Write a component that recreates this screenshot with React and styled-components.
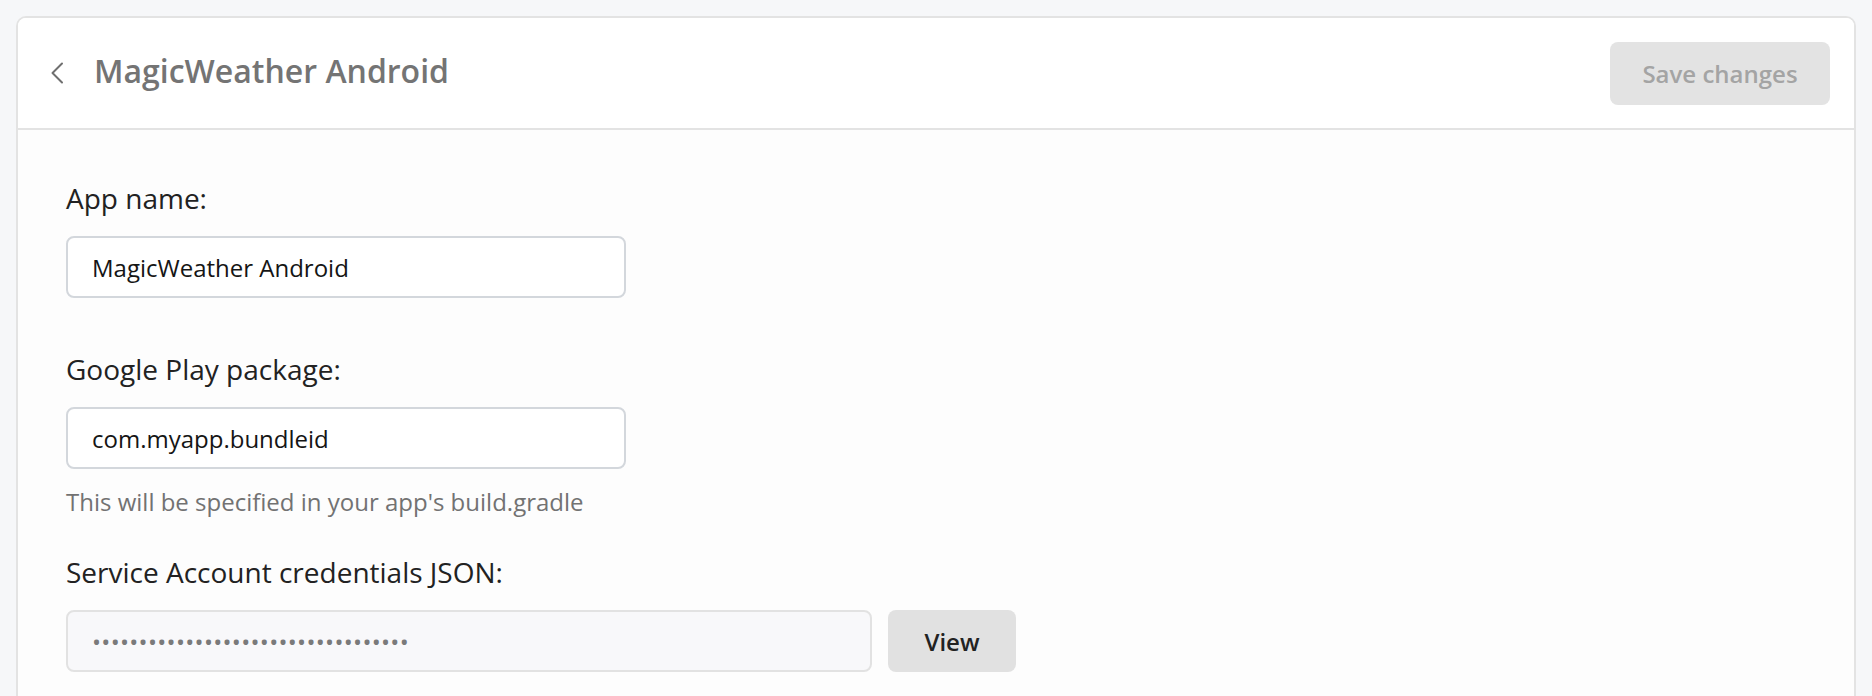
import React from "react";
import styled, { createGlobalStyle } from "styled-components";

const GlobalStyle = createGlobalStyle`
  html, body {
    margin: 0;
    padding: 0;
    background: #f6f7f9;
    font-family: "Open Sans", "Noto Sans", sans-serif;
  }
  * { box-sizing: border-box; }
`;

const Page = styled.div`
  padding: 16px 16px 0 16px;
`;

const Card = styled.div`
  border: 2px solid #e3e3e3;
  border-radius: 10px;
  background: #ffffff;
  overflow: hidden;
`;

const Header = styled.div`
  height: 112px;
  display: flex;
  align-items: center;
  justify-content: space-between;
  padding: 0 24px 0 32px;
  border-bottom: 2px solid #e3e3e3;
  background: #ffffff;
`;

const TitleGroup = styled.div`
  display: flex;
  align-items: center;
  gap: 30px;
`;

const BackButton = styled.button`
  border: none;
  background: none;
  padding: 0;
  display: flex;
  align-items: center;
  cursor: pointer;
`;

const Title = styled.h1`
  margin: 0 0 5px 0;
  font-size: 32px;
  font-weight: 600;
  color: #747474;
  line-height: 44px;
`;

const SaveButton = styled.button`
  width: 220px;
  height: 63px;
  border: none;
  border-radius: 8px;
  background: #e3e3e3;
  color: #a4a4a4;
  font-family: "Open Sans", sans-serif;
  font-size: 24px;
  font-weight: 600;
`;

const Body = styled.div`
  padding: 48px 48px 80px 48px;
  background: #fdfdfd;
  display: flex;
  flex-direction: column;
`;

const Field = styled.div`
  display: flex;
  flex-direction: column;
  margin-top: ${(p) => p.$top || 0}px;
`;

const Label = styled.label`
  font-size: 28px;
  line-height: 40px;
  color: #222222;
  margin-bottom: 18px;
`;

const Input = styled.input`
  width: 560px;
  height: 62px;
  border: 2px solid #d3d7dc;
  border-radius: 8px;
  padding: 0 24px;
  font-family: "Open Sans", sans-serif;
  font-size: 24px;
  color: #151515;
  background: #ffffff;
  outline: none;
`;

const Help = styled.div`
  margin-top: 15px;
  font-size: 24px;
  line-height: 36px;
  color: #727272;
`;

const Row = styled.div`
  display: flex;
  align-items: center;
  gap: 16px;
`;

const SecretField = styled.div`
  width: 806px;
  height: 62px;
  border: 2px solid #e2e2e2;
  border-radius: 8px;
  background: #f8f8fa;
  padding: 0 24px;
  display: flex;
  align-items: center;
  font-family: "Open Sans", sans-serif;
  font-size: 24px;
  letter-spacing: 0.3px;
  color: #7a7a7a;
`;

const ViewButton = styled.button`
  width: 128px;
  height: 62px;
  border: none;
  border-radius: 8px;
  background: #e1e1e1;
  color: #222222;
  font-family: "Open Sans", sans-serif;
  font-size: 24px;
  font-weight: 600;
`;

const Chevron = () => (
  <svg width="14" height="22" viewBox="0 0 14 22" fill="none">
    <polyline
      points="12,1.5 2.5,11 12,20.5"
      stroke="#6f6f6f"
      strokeWidth="2"
      strokeLinecap="round"
      strokeLinejoin="round"
    />
  </svg>
);

export default function App() {
  return (
    <>
      <GlobalStyle />
      <Page>
        <Card>
          <Header>
            <TitleGroup>
              <BackButton aria-label="Back">
                <Chevron />
              </BackButton>
              <Title>MagicWeather Android</Title>
            </TitleGroup>
            <SaveButton disabled>Save changes</SaveButton>
          </Header>
          <Body>
            <Field>
              <Label>App name:</Label>
              <Input defaultValue="MagicWeather Android" />
            </Field>
            <Field $top={51}>
              <Label>Google Play package:</Label>
              <Input defaultValue="com.myapp.bundleid" />
              <Help>This will be specified in your app's build.gradle</Help>
            </Field>
            <Field $top={32}>
              <Label>Service Account credentials JSON:</Label>
              <Row>
                <SecretField>{"•".repeat(34)}</SecretField>
                <ViewButton>View</ViewButton>
              </Row>
            </Field>
          </Body>
        </Card>
      </Page>
    </>
  );
}
